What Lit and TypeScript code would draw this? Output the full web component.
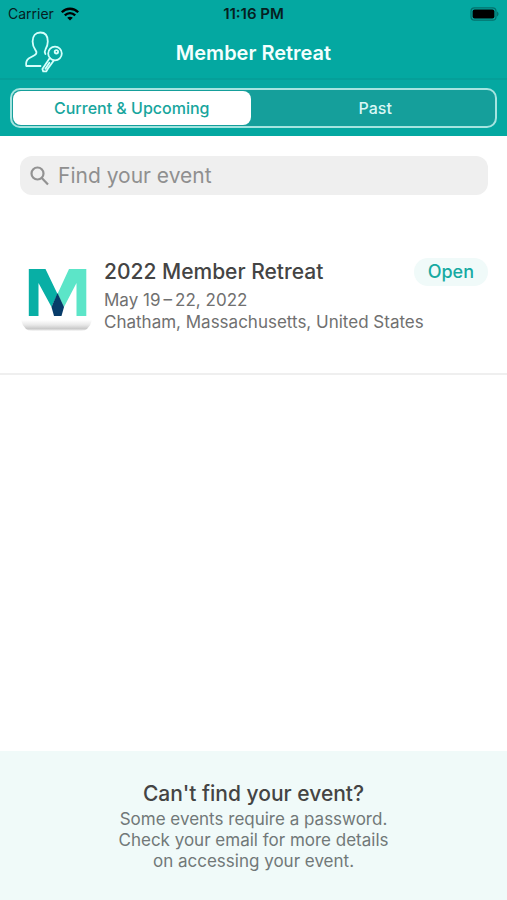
import { LitElement, html, css } from "lit";
import { customElement, state } from "lit/decorators.js";
import { classMap } from "lit/directives/class-map.js";

type Tab = "current" | "past";

interface RetreatEvent {
  name: string;
  dates: string;
  place: string;
  tab: Tab;
}

const EVENTS: RetreatEvent[] = [
  {
    name: "2022 Member Retreat",
    dates: "May 19\u2009–\u200922, 2022",
    place: "Chatham, Massachusetts, United States",
    tab: "current",
  },
];

@customElement("status-bar")
export class StatusBar extends LitElement {
  static styles = css`
    :host {
      display: grid;
      grid-template-columns: 1fr auto 1fr;
      align-items: center;
      height: 28px;
      padding: 0 8px;
      color: #06201f;
      font-size: 14px;
      line-height: 16px;
    }
    .carrier {
      display: flex;
      align-items: center;
      gap: 6px;
    }
    .time {
      font-size: 15px;
      font-weight: 600;
    }
    .battery {
      justify-self: end;
    }
    svg {
      display: block;
    }
  `;

  render() {
    return html`
      <span class="carrier">
        Carrier
        <svg width="20" height="14" viewBox="0 0 18 14" fill="none" stroke="#000" stroke-width="2.3" aria-label="Wi-Fi">
          <path d="M0.8 5.2C5.4 0.6 12.6 0.6 17.2 5.2" />
          <path d="M3.8 8.4C6.8 5.4 11.2 5.4 14.2 8.4" />
          <path d="M9 13.6L6.2 10.8C7.8 9.3 10.2 9.3 11.8 10.8Z" fill="#000" stroke="none" />
        </svg>
      </span>
      <span class="time">11:16 PM</span>
      <svg class="battery" width="29" height="14" viewBox="0 0 29 14" aria-label="Battery full">
        <rect x="1" y="0.8" width="25" height="12.4" rx="3.5" fill="none" stroke="#04706c" stroke-width="1.2" />
        <rect x="2.6" y="2.4" width="21.8" height="9.2" rx="2" fill="#000" />
        <path d="M27 4.6C29 5.4 29 8.6 27 9.4Z" fill="#04706c" />
      </svg>
    `;
  }
}

@customElement("event-row")
export class EventRow extends LitElement {
  static properties = { event: { attribute: false } };
  declare event: RetreatEvent;

  static styles = css`
    :host {
      display: flex;
      gap: 11px;
      padding: 63px 19px 39px 20px;
      border-bottom: 2px solid #efefef;
    }
    .logo {
      flex: none;
      display: block;
      margin-top: 3px;
    }
    .body {
      flex: 1;
      min-width: 0;
    }
    .head {
      display: flex;
      align-items: center;
      justify-content: space-between;
      margin-bottom: 3px;
    }
    h2 {
      margin: 0;
      color: #444;
      font-size: 21px;
      font-weight: 500;
      line-height: 28px;
    }
    .open {
      height: 28px;
      padding: 0 14px;
      border: 0;
      border-radius: 14px;
      background: #f0faf9;
      color: #17aaa2;
      font: 500 18px/28px Inter, "Liberation Sans", sans-serif;
    }
    p {
      margin: 0;
      color: #707070;
      font-size: 17px;
      line-height: 22px;
    }
  `;

  render() {
    return html`
      <svg class="logo" width="73" height="73" viewBox="0 0 73 73" aria-label="Event logo">
        <defs>
          <linearGradient id="shade" x1="0" y1="0" x2="0" y2="1">
            <stop offset="0" stop-color="#fff" />
            <stop offset="0.45" stop-color="#e8e8e8" />
            <stop offset="0.8" stop-color="#c8c8c8" />
            <stop offset="1" stop-color="#fcfcfc" />
          </linearGradient>
        </defs>
        <path d="M1 59H72Q71 64 67 68Q65 70 61 70H12Q8 70 6 68Q2 64 1 59Z" fill="url(#shade)" />
        <path d="M8.800 8H25.500L37.500 33L31.500 46L18.500 22V55H8.800Z" fill="#08afa5" />
        <path d="M66.300 8H49L37.500 33L44 46L56.500 22V55H66.300Z" fill="#5ce5c8" />
        <path d="M37.500 32L44 46L41.500 55H34L31.500 46Z" fill="#073b69" />
      </svg>
      <div class="body">
        <div class="head">
          <h2>${this.event.name}</h2>
          <button class="open" type="button">Open</button>
        </div>
        <p>${this.event.dates}</p>
        <p>${this.event.place}</p>
      </div>
    `;
  }
}

@customElement("app-root")
export class AppRoot extends LitElement {
  @state() private tab: Tab = "current";
  @state() private query = "";

  static styles = css`
    :host {
      display: flex;
      flex-direction: column;
      min-height: 100vh;
      background: #fff;
      font-family: Inter, "Liberation Sans", sans-serif;
    }
    header {
      background: #04a8a1;
    }
    .nav {
      display: grid;
      grid-template-columns: 1fr auto 1fr;
      align-items: center;
      height: 50px;
      padding: 0 24px;
      border-bottom: 2px solid #059f99;
    }
    .account {
      display: block;
      width: 40px;
      padding: 0;
      border: 0;
      background: none;
    }
    .account svg {
      display: block;
    }
    h1 {
      margin: 0;
      color: #f4fffe;
      font-size: 20px;
      font-weight: 600;
      line-height: 24px;
    }
    .tabs {
      padding: 8px 10px;
    }
    .segments {
      display: flex;
      gap: 6px;
      height: 34px;
      padding: 1px;
      border: 2px solid #a5e4e0;
      border-radius: 10px;
      background: #159f9b;
    }
    .segment {
      flex: 1;
      padding: 0;
      border: 0;
      border-radius: 8px;
      background: none;
      color: #d9f7f5;
      font: 500 16px/34px Inter, "Liberation Sans", sans-serif;
    }
    .segment.active {
      background: #fff;
      color: #17a59d;
    }
    .search {
      display: flex;
      align-items: center;
      gap: 9px;
      height: 39px;
      margin: 20px 19px 0 20px;
      padding: 0 10px;
      border-radius: 12px;
      background: #efefef;
    }
    .search svg {
      flex: none;
    }
    .search input {
      flex: 1;
      min-width: 0;
      padding: 0;
      border: 0;
      outline: 0;
      background: none;
      color: #444;
      font: 400 21px/28px Inter, "Liberation Sans", sans-serif;
    }
    .search input::placeholder {
      color: #8f8f8f;
      opacity: 1;
    }
    main {
      flex: 1;
    }
    footer {
      padding: 28px 20px;
      background: #f0faf9;
      text-align: center;
    }
    h3 {
      margin: 0;
      color: #444;
      font-size: 21px;
      font-weight: 500;
      line-height: 30px;
    }
    footer p {
      margin: 0;
      color: #717878;
      font-size: 17px;
      line-height: 21px;
    }
  `;

  private segment(tab: Tab, label: string) {
    const active = this.tab === tab;
    return html`<button
      type="button"
      class=${classMap({ segment: true, active })}
      aria-pressed=${active}
      @click=${() => (this.tab = tab)}
    >${label}</button>`;
  }

  render() {
    const shown = EVENTS.filter(
      (e) => e.tab === this.tab && e.name.toLowerCase().includes(this.query.toLowerCase()),
    );
    return html`
      <header>
        <status-bar></status-bar>
        <div class="nav">
          <button class="account" type="button" aria-label="Sign in">
            <svg width="40" height="44" viewBox="0 0 40 44" fill="none" stroke="#d5fffb" stroke-width="1.800" stroke-linecap="round" stroke-linejoin="round">
              <path d="M16.500 35H2.200C1.600 30.500 2.400 28.800 5 27.200L10.500 24.200C13 22.800 12.800 21 11.600 19.400C9.400 16.500 8.600 14 8.600 10.500C8.600 4.800 11.600 1.500 16.300 1.500C21 1.500 23.800 4.800 23.800 10.500C23.800 13.600 23 15.800 21.500 18.400C20.500 20 20.500 21.600 21.400 23" />
              <circle cx="31" cy="22.500" r="6.800" />
              <circle cx="32.400" cy="20.800" r="1.700" />
              <path d="M25.800 27L18.400 38L19.200 40.400H22.200L24 37.600L29.800 29.400M25.400 31.800L21.400 37.800" />
            </svg>
          </button>
          <h1>Member Retreat</h1>
        </div>
        <div class="tabs">
          <div class="segments" role="group" aria-label="Events shown">
            ${this.segment("current", "Current & Upcoming")}
            ${this.segment("past", "Past")}
          </div>
        </div>
      </header>
      <main>
        <label class="search">
          <svg width="19" height="20" viewBox="0 0 19 20" fill="none" stroke="#929292" stroke-width="2.200" aria-hidden="true">
            <circle cx="7.500" cy="7.500" r="6" />
            <path d="M11.800 12L18 18.400" />
          </svg>
          <input
            type="text"
            aria-label="Find your event"
            placeholder="Find your event"
            .value=${this.query}
            @input=${(e: Event) => (this.query = (e.target as HTMLInputElement).value)}
          />
        </label>
        ${shown.map((event) => html`<event-row .event=${event}></event-row>`)}
      </main>
      <footer>
        <h3>Can't find your event?</h3>
        <p>Some events require a password.<br />Check your email for more details<br />on accessing your event.</p>
      </footer>
    `;
  }
}
